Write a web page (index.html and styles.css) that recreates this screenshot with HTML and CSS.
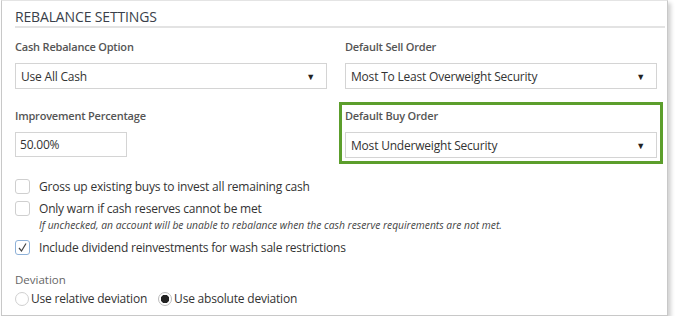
FILE: index.html
```html
<!DOCTYPE html>
<html>
<head>
<meta charset="utf-8">
<link rel="stylesheet" href="styles.css">
</head>
<body>
<div class="panel">
  <h2 class="title">REBALANCE SETTINGS</h2>
  <div class="grid">
    <div class="field">
      <div class="label">Cash Rebalance Option</div>
      <div class="select"><span>Use All Cash</span><span class="arrow">&#9660;</span></div>
    </div>
    <div class="field">
      <div class="label">Default Sell Order</div>
      <div class="select"><span>Most To Least Overweight Security</span><span class="arrow">&#9660;</span></div>
    </div>
    <div class="field">
      <div class="label">Improvement Percentage</div>
      <div class="input">50.00%</div>
    </div>
    <div class="field highlight">
      <div class="label">Default Buy Order</div>
      <div class="select"><span>Most Underweight Security</span><span class="arrow">&#9660;</span></div>
    </div>
  </div>
  <div class="checks">
    <div class="check"><span class="box"></span><span>Gross up existing buys to invest all remaining cash</span></div>
    <div class="check"><span class="box"></span><span>Only warn if cash reserves cannot be met</span></div>
    <div class="note">If unchecked, an account will be unable to rebalance when the cash reserve requirements are not met.</div>
    <div class="check"><span class="box checked"><svg width="11" height="11" viewBox="0 0 11 11"><path d="M2 6 L4.5 9 L9 1.5" fill="none" stroke="#444" stroke-width="1.2"/></svg></span><span>Include dividend reinvestments for wash sale restrictions</span></div>
  </div>
  <div class="deviation">
    <div class="dlabel">Deviation</div>
    <div class="radios">
      <span class="radio"></span><span class="rtext">Use relative deviation</span>
      <span class="radio on"></span><span class="rtext">Use absolute deviation</span>
    </div>
  </div>
</div>
</body>
</html>
```
FILE: styles.css
```css
html, body { margin: 0; padding: 0; background: #fff; }
body { font-family: "Open Sans", "Noto Sans", sans-serif; color: #333; }
.panel {
  margin-left: 1px;
  width: 667px;
  height: 316px;
  box-sizing: border-box;
  border: 1px solid #c8c8c8;
  border-top-color: #e4e4e4;
  box-shadow: 3px 3px 4px rgba(0,0,0,0.18);
  padding: 0 2px 0 13px;
}
.title {
  margin: 0;
  font-weight: normal;
  font-size: 14px;
  color: #3a3f4a;
  letter-spacing: -0.15px;
  padding-top: 7px;
  height: 18px;
  line-height: 18px;
  border-bottom: 2px solid #e3e3e3;
}
.grid {
  display: grid;
  grid-template-columns: 312px 312px;
  column-gap: 18px;
  row-gap: 19px;
  margin-top: 11px;
}
.label {
  font-size: 11px;
  font-weight: 600;
  letter-spacing: -0.2px;
  color: #555;
  height: 16px;
  line-height: 16px;
  margin-bottom: 8px;
}
.select {
  height: 26px;
  box-sizing: border-box;
  border: 1px solid #d4d4d4;
  display: flex;
  align-items: center;
  justify-content: space-between;
  padding: 0 11px 0 5px;
  font-size: 12px;
  letter-spacing: -0.2px;
  color: #333;
}
.arrow { font-size: 9px; color: #222; }
.input {
  width: 112px;
  height: 25px;
  box-sizing: border-box;
  border: 1px solid #d4d4d4;
  display: flex;
  align-items: center;
  padding-left: 4px;
  font-size: 12px;
  letter-spacing: -0.2px;
}
.highlight { outline: 3px solid #5c9e2c; outline-offset: 3px; }
.checks { margin-top: 20px; }
.check {
  display: flex;
  align-items: center;
  height: 16px;
  font-size: 12px;
  letter-spacing: -0.2px;
  color: #333;
  margin-bottom: 6px;
}
.box {
  width: 13px;
  height: 13px;
  border: 1px solid #cfcfcf;
  border-radius: 3px;
  margin-right: 9px;
  display: flex;
  align-items: center;
  justify-content: center;
  flex: none;
}
.box.checked { border-color: #8eb1d8; }
.note {
  font-size: 10.3px;
  font-style: italic;
  color: #444;
  margin: -4px 0 7px 24px;
  height: 14px;
  line-height: 14px;
}
.deviation { margin-top: 17px; }
.dlabel { font-size: 11.5px; color: #666; height: 16px; line-height: 16px; margin-bottom: 2px; }
.radios { display: flex; align-items: center; font-size: 12px; letter-spacing: -0.2px; color: #333; }
.radio {
  width: 14px; height: 14px; box-sizing: border-box;
  border: 1px solid #d0d0d0; border-radius: 50%; margin-right: 2px;
}
.radio.on { margin-left: 11px; border: 1px solid #bbb; background: radial-gradient(circle, #222 0 4px, #fff 4.5px); }
```
